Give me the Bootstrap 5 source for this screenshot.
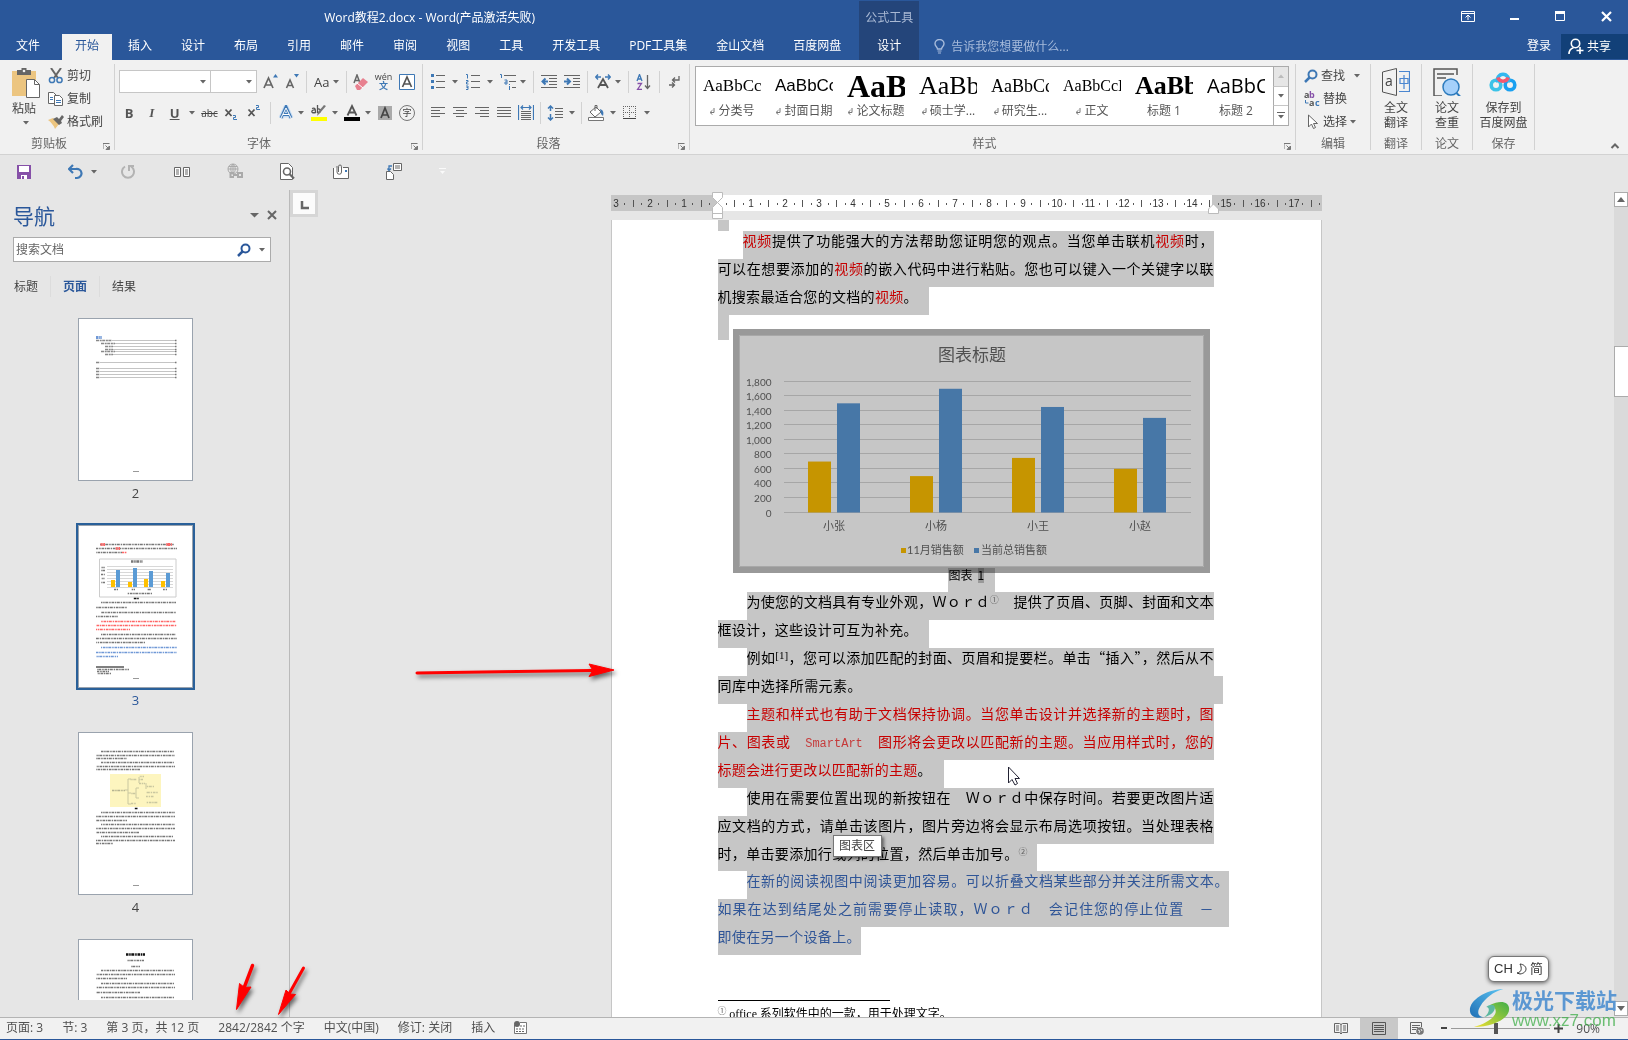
<!DOCTYPE html>
<html lang="zh-CN">
<head>
<meta charset="utf-8">
<meta name="viewport" content="width=device-width, initial-scale=1">
<title>Word教程2.docx - Word</title>
<link href="https://cdn.jsdelivr.net/npm/bootstrap@5.3.0/dist/css/bootstrap.min.css" rel="stylesheet">
<style>
:root{--ui:"Open Sans","Noto Sans CJK SC",sans-serif;--blue:#2a579a;--ico:#666;--acc:#3e78b5}
body{font:12px/16px var(--ui);color:#444;background:#e6e6e6;overflow:hidden}
button,input{font:inherit;color:inherit}
.tb{border:0;background:none;padding:0;display:inline-flex;align-items:center;white-space:nowrap;line-height:16px}
svg{display:block;flex:none}
.head{background:var(--blue);color:#fff;height:60px}
.head-title{height:34px;line-height:35px}
.tabs{height:26px;gap:3px;padding:0 5px 0 3px}
.tabs a,.ctx a{color:#fff;text-decoration:none;padding:0 13px;line-height:24px;white-space:nowrap}
.tabs a.on{background:#f1f1f1;color:var(--blue)}
.tabs a.file{margin-right:6px}
.ctx{width:60px;background:#24457a;margin-top:1px}
.ctx span{color:#a9b9d4;line-height:33px}
.tell{color:#a7bbdb;padding-left:15px;gap:6px}
.tell input{border:0;background:none;color:#a7bbdb;padding:0;width:160px;outline:0}
.tell input::placeholder{color:#a7bbdb;opacity:1}
.winctl{height:34px;padding:0 16px 2px 0;gap:35px}
.share{background:#124078;height:25px;width:67px;padding-left:7px;gap:3px}
.ribbon{background:#f1f1f1;height:95px;padding:4px 0;border-bottom:1px solid #d2d2d2}
.grp{border-right:1px solid #d2d2d2;height:86px;position:relative}
.grp-label{height:14px;line-height:16px;text-align:center;color:#666}
.launch{position:absolute;right:4px;bottom:0}
.g-clip{width:115px}.g-font{width:308px;padding:0 7px 0 4px}.g-para{width:267px;padding:0 6px 0 7px}
.g-style{width:606px}.g-edit{width:75px}.g-one{width:51px}.g-save{width:62px}
.grp-body{height:72px}
.rows{padding-top:2px}
.trow{height:31px;gap:6px;align-items:center;display:flex}
.trow-2{padding-left:2px}
.trow .vr-line{width:1px;height:22px;background:#d2d2d2}
.caret-w{width:12px;display:inline-flex;justify-content:flex-end}
.combo{height:23px;border:1px solid #c6c6c6;background:#fff;display:flex;align-items:center;justify-content:flex-end;padding-right:4px}
.combo input{border:0;outline:0;flex:1;min-width:0;background:none;padding:0 4px}
.ltr{width:16px;text-align:center;font-weight:700;font-size:13px;color:#555;display:block}
.small-b{height:23px;gap:3px}
.gal-wrap{padding:2px 6px 0 5px}
.gal{height:60px;border:1px solid #ababab;background:#fff}
.gal-item{width:72px;padding:0 7px;flex:none;display:flex;flex-direction:column;border:0;background:none}
.gal-prev{height:35px;line-height:38px;width:58px;overflow:hidden;color:#000;text-align:left;white-space:nowrap}
.gal-name{height:18px;line-height:18px;width:58px;display:flex;justify-content:center;align-items:center;gap:3px;color:#555;white-space:nowrap}
.serif{font-family:"Liberation Serif","Noto Sans CJK SC",serif}
.arial{font-family:"Liberation Sans",sans-serif}
.f17{font-size:17px}.f18{font-size:18px}.f16{font-size:16px}.f24{font-size:26px}.f30{font-size:32px}.f21{font-size:20px}
.gal-scroll{width:15px;margin-left:auto}
.gal-scroll button{flex:1;justify-content:center;border-left:1px solid #ababab;border-bottom:1px solid #c6c6c6}
.big{flex-direction:column;line-height:15px}
.qat{height:35px;padding:0 0 2px 15px}
.qat .cell{width:53px;gap:7px}
.navp{width:290px;border-right:1px solid #bababa;padding-bottom:17px}
.navp-in{width:271px}
.navp h1{font-size:21px;line-height:28px;color:var(--blue);margin:0;font-weight:400}
.nav-head{padding:12px 0 0 13px;height:47px;flex:none}
.find{margin-left:13px;height:25px;border:1px solid #ababab;background:#fff;padding:0 5px 0 2px}
.find input{border:0;outline:0;padding:0;flex:1;min-width:0}
.find input::placeholder{color:#666;opacity:1}
.nav-tabs2{padding:14px 0 0 14px;height:56px;flex:none}
.nav-tabs2 a{color:#444;text-decoration:none;line-height:21px;height:21px;padding-right:12px;margin-right:12px;border-right:1px solid #dcdcdc}
.nav-tabs2 a:last-child{border:0}
.nav-tabs2 a.on{color:var(--blue);font-weight:700}
.thumbs{overflow:hidden;min-height:0;padding-top:0}
.thumb{color:#444;text-decoration:none;font-size:13px;height:207px;flex:none}
.thumb .pg{border:1px solid #9aa3ae;background:#fff;margin-bottom:4px}
.thumb.on{color:var(--blue)}
.thumb.on .pg{outline:2px solid #2a6099}
.corner{width:28px;height:27px;border:3px solid #d6d6d6;background:#fbfbfb;flex:none}
.ruler{width:711px;margin:0 auto}
.paper{width:711px;background:#fff;border:solid #c6c6c6;border-width:0 1px;margin:0 auto;padding:0 107px 0 106px;color:#000;position:relative;overflow:hidden;font:14px/18px "Noto Sans CJK SC",sans-serif}
.ln{background:#c6c6c6;height:28px;text-align:justify;text-align-last:justify;white-space:nowrap;width:496px}
.ln.ind1{margin-left:25px;width:471px}
.ln.ind{margin-left:29px;width:467px}
.ln.s14{width:211px;padding-right:11px}
.ln.s15{width:226px;padding-right:12px}
.ln.s22{width:319px;padding-right:9px;height:27px}
.ln.s10{width:505px;padding-right:361px}
.ln.s10b{width:143px}
.ln.over{width:482px}
.ln.full{width:511px;padding-right:15px}
.nub{width:11px;background:#c6c6c6}
.c-red{color:#c60000}.c-blu{color:#2f5597}
.mono{font:12px/18px "Liberation Mono",monospace;opacity:.7}
.note{font-size:9px;color:#666;vertical-align:4px;line-height:1}
.sup1{font:11px/1 "Liberation Serif",serif;vertical-align:4px}
.chartbox{margin:-11px 0 0 15px;width:477px;height:244px;border:6px solid #999;background:#c6c6c6;position:relative}
.chartbox svg{margin:-6px}
.capt{width:47px;height:24px;background:#c6c6c6;mix-blend-mode:multiply;margin:-5px 0 0 230px;font-size:12px;line-height:14px;padding-left:1px;position:relative;z-index:1}
.capt b{background:#999;font-weight:400;display:inline-block;margin-left:5px;height:15px}
.fn-rule{width:172px;height:1px;background:#000;margin-top:45px}
.fn{font-size:12px;line-height:24px;white-space:nowrap}
.tip{position:absolute;left:221px;top:615px;width:49px;height:22px;border:1px solid #767676;background:#fff;color:#444;font-size:12px;line-height:18px;text-align:center;box-shadow:2px 2px 3px rgba(0,0,0,.5)}
.mouse{position:absolute;left:395px;top:546px}
.vscroll{width:14px;background:#dadada;margin:2px 0 1px}
.vscroll button{width:14px;height:15px;border:1px solid #ababab;background:#fff;justify-content:center}
.vthumb{height:51px;background:#fff;border:1px solid #ababab;border-right:0;margin-top:139px}
.stat{height:23px;background:#f1f1f1;border-top:1px solid #b4b4b4;border-bottom:1px solid var(--blue);padding-left:6px;color:#505050}
.stat .left{gap:19px;padding-bottom:2px}
.stat .view{width:38px;height:21px;justify-content:center}
.stat .view.on{background:#c8c8c8}
.zoomer{-webkit-appearance:none;appearance:none;width:99px;height:11px;background:linear-gradient(#9a9a9a,#9a9a9a) center/100% 1px no-repeat;margin:0 4px 0 4px}
.zoomer::-webkit-slider-thumb{-webkit-appearance:none;width:4px;height:11px;background:#555}
.ime{position:absolute;right:79px;bottom:58px;width:61px;height:26px;border:1px solid #777;border-radius:6px;background:#fff;box-shadow:0 1px 4px rgba(0,0,0,.6);color:#333;gap:3px;font:13px/24px "Liberation Sans","Noto Sans CJK SC",sans-serif}
.wm{position:absolute;right:11px;bottom:9px;pointer-events:none}
.wm b{display:block;font:700 21px/22px "Noto Sans CJK SC",sans-serif;color:#5b97d2}
.wm i{display:block;font:17px/21px "Liberation Sans",sans-serif;color:#3fae49;opacity:.75}
.marks{position:absolute;left:0;top:0;pointer-events:none;filter:drop-shadow(2px 3px 2px rgba(0,0,0,.55))}
</style>
<script src="https://cdn.jsdelivr.net/npm/bootstrap@5.3.0/dist/js/bootstrap.bundle.min.js"></script>
</head>
<body>
<svg width="0" height="0" class="position-absolute">
<defs>
<symbol id="car" viewBox="0 0 6 4"><path d="M0 0h6L3 3.5z" fill="#666"/></symbol>
<symbol id="lau" viewBox="0 0 7 7"><path d="M0 6V.5h6.5" fill="none" stroke="#777"/><path d="M2.5 2.5l2.5 2.5M6.5 3v3.5H3z" stroke="#777" fill="#777"/></symbol>
<symbol id="ret" viewBox="0 0 6 7"><path d="M5 0v4.5H1.500M3.500 2.200L1 4.500l2.500 2.200" fill="none" stroke="#777"/></symbol>
<symbol id="mag" viewBox="0 0 14 14"><circle cx="8.500" cy="5.500" r="4" fill="none" stroke="currentColor" stroke-width="2"/><path d="M5.500 8.500L1 13" stroke="currentColor" stroke-width="2.500"/></symbol>
</defs>
</svg>
<div class="d-flex flex-column vh-100 position-relative">

<header class="head d-flex flex-shrink-0">
  <div class="d-flex flex-column">
    <div class="head-title text-center">Word教程2.docx - Word(产品激活失败)</div>
    <nav class="tabs d-flex">
      <a class="file" href="#">文件</a><a class="on" href="#">开始</a><a href="#">插入</a><a href="#">设计</a><a href="#">布局</a><a href="#">引用</a><a href="#">邮件</a><a href="#">审阅</a><a href="#">视图</a><a href="#">工具</a><a href="#">开发工具</a><a href="#">PDF工具集</a><a href="#">金山文档</a><a href="#">百度网盘</a>
    </nav>
  </div>
  <div class="ctx d-flex flex-column align-items-center"><span>公式工具</span><a href="#">设计</a></div>
  <div class="flex-grow-1 d-flex flex-column">
    <div class="winctl d-flex align-items-center justify-content-end">
      <button class="tb" aria-label="功能区显示选项"><svg width="14" height="11" viewBox="0 0 14 11" fill="none" stroke="#fff"><path d="M.5.500h13v10H.5zM.5 2.500h13M7 9V4.500M4.500 6.500L7 4l2.500 2.500"/></svg></button>
      <button class="tb" aria-label="最小化"><svg width="10" height="10"><path d="M0 7h9v2H0z" fill="#fff"/></svg></button>
      <button class="tb" aria-label="最大化"><svg width="11" height="11"><path d="M.5.500h9v9H.5z" fill="none" stroke="#fff"/><path d="M0 0h10v3H0z" fill="#fff"/></svg></button>
      <button class="tb" aria-label="关闭"><svg width="11" height="11"><path d="M1 1l9 9M10 1l-9 9" stroke="#fff" stroke-width="2.200"/></svg></button>
    </div>
    <div class="d-flex justify-content-between">
      <label class="tell d-flex align-items-center"><svg width="11" height="15" viewBox="0 0 11 15" fill="none" stroke="#a7bbdb"><path d="M3.500 10C3.500 8 1 7.500 1 4.800a4.500 4.300 0 0 1 9 0C10 7.500 7.500 8 7.500 10z" stroke-width="1.400"/><path d="M3.500 12h4M4 14h3"/></svg><input placeholder="告诉我您想要做什么..." aria-label="告诉我您想要做什么"></label>
      <div class="d-flex align-items-start" style="gap:10px"><a href="#" class="text-white text-decoration-none lh-lg">登录</a>
      <button class="tb share"><svg width="16" height="17" viewBox="0 0 16 17" fill="none" stroke="#fff" stroke-width="1.600"><circle cx="7.500" cy="5.500" r="4.200"/><path d="M1 16c0-3.500 2-5.500 4.500-6.300M12 9v7M8.500 12.500h7"/></svg>共享</button></div>
    </div>
  </div>
</header>

<section class="ribbon d-flex flex-shrink-0">
  <div class="grp g-clip">
    <div class="grp-body d-flex">
      <button class="tb big align-items-start justify-content-start" style="padding:4px 8px 0 12px"><svg width="28" height="31" viewBox="0 0 28 31"><path d="M0 3h24v25H0z" fill="#ecc580"/><path d="M5 2h4.500V0h5v2H19v5H5z" fill="#666"/><circle cx="12" cy="3" r="1.300" fill="#f1f1f1"/><path d="M14.500 11.500h8l5 5v13h-13z" fill="#fff" stroke="#666"/><path d="M22.500 11.500v5h5" fill="none" stroke="#666"/></svg><span class="mt-1 lh-1">粘贴</span><svg width="6" height="4" style="margin:6px 0 0 11px"><use href="#car"/></svg></button>
      <div class="d-flex flex-column">
        <button class="tb small-b"><svg width="16" height="16" viewBox="0 0 16 16"><path d="M3 0l7 10M13 0L6 10" stroke="#666" stroke-width="2"/><g fill="none" stroke="#3e78b5" stroke-width="1.500"><circle cx="4" cy="12" r="2.600"/><circle cx="11.500" cy="12" r="2.600"/></g></svg>剪切</button>
        <button class="tb small-b"><svg width="16" height="16" viewBox="0 0 16 16" fill="#fff" stroke="#666"><path d="M.5 1.500h5l3 3v8h-8z"/><path d="M6.500 4.500h5l3 3v7h-8z"/><path d="M2 6.500h3M2 8.500h3M8 9.500h5M8 11.500h5" stroke="#3e78b5"/></svg>复制</button>
        <button class="tb small-b"><svg width="16" height="16" viewBox="0 0 16 16"><path d="M0 6l5-2 6 6-4 5C6 12 3 8 0 6z" fill="#ecc580"/><path d="M5 5l4-2 2 2 3-4 2 2-3 4 1 2-3 2z" fill="#666"/></svg>格式刷</button>
      </div>
    </div>
    <div class="grp-label pe-3">剪贴板</div><svg class="launch" width="7" height="7"><use href="#lau"/></svg>
  </div>

  <div class="grp g-font">
    <div class="grp-body rows">
      <div class="trow justify-content-between">
        <div class="d-flex"><div class="combo" style="width:92px"><input aria-label="字体"><svg width="6" height="4"><use href="#car"/></svg></div><div class="combo border-start-0" style="width:46px"><input aria-label="字号"><svg width="6" height="4"><use href="#car"/></svg></div></div>
        <button class="tb" aria-label="增大字号"><svg width="15" height="16" viewBox="0 0 15 16"><path d="M1 14L5.500 4 10 14M2.500 11h6" fill="none" stroke="#666" stroke-width="1.700"/><path d="M10 3.500h5L12.500 0z" fill="#3e78b5"/></svg></button>
        <button class="tb" aria-label="减小字号"><svg width="15" height="16" viewBox="0 0 15 16"><path d="M1.500 14L5 6l3.500 8M3 11.500h4" fill="none" stroke="#666" stroke-width="1.600"/><path d="M9 0h5l-2.500 3.500z" fill="#3e78b5"/></svg></button>
        <i class="vr-line"></i>
        <button class="tb" style="font-size:13px">Aa<span class="caret-w" style="width:10px"><svg width="6" height="4"><use href="#car"/></svg></span></button>
        <i class="vr-line"></i>
        <button class="tb" aria-label="清除格式"><svg width="15" height="16" viewBox="0 0 15 16"><path d="M1 9L4 1l3 8M2 6.500h4" fill="none" stroke="#666" stroke-width="1.500"/><path d="M2 12l8-8 5 4-8 8H4z" fill="#e8808f"/><path d="M4 9l6 5" stroke="#fff"/></svg></button>
        <button class="tb flex-column" aria-label="拼音指南"><span style="font-size:9px;line-height:8px">wén</span><span style="font-size:9px;line-height:9px;color:#3e78b5;font-weight:700">文</span></button>
        <button class="tb" aria-label="字符边框"><svg width="16" height="16"><path d="M.5.500h15v15H.5z" fill="#fff" stroke="#3e78b5"/><path d="M3.500 13L8 3l4.500 10M5 10h6" fill="none" stroke="#555" stroke-width="1.700"/></svg></button>
      </div>
      <div class="trow trow-2 justify-content-between">
        <button class="tb ltr">B</button><button class="tb ltr fst-italic serif">I</button>
        <button class="tb"><span class="ltr text-decoration-underline">U</span><span class="caret-w"><svg width="6" height="4"><use href="#car"/></svg></span></button>
        <button class="tb text-decoration-line-through justify-content-center" style="width:16px;font-size:10px">abc</button>
        <button class="tb" aria-label="下标"><svg width="16" height="16"><path d="M1.500 4.500l6 6.500M7.500 4.500l-6 6.500" stroke="#555" stroke-width="1.800"/><path d="M9 10.500h2.500v2H9.500v2H13" fill="none" stroke="#3e78b5"/></svg></button>
        <button class="tb" aria-label="上标"><svg width="16" height="16"><path d="M1.500 4.500l6 6.500M7.500 4.500l-6 6.500" stroke="#555" stroke-width="1.800"/><path d="M9 .5h2.500v2H9.500v2H13" fill="none" stroke="#3e78b5"/></svg></button>
        <i class="vr-line"></i>
        <button class="tb" aria-label="文本效果"><svg width="16" height="16"><path d="M3 13L8 2l5 11M5 10h6" fill="none" stroke="#c9def4" stroke-width="5"/><path d="M3 13L8 2l5 11M5 9.500h6" fill="none" stroke="#3e78b5" stroke-width="3"/><path d="M3 13L8 3l5 10M5 9.500h6" fill="none" stroke="#fff"/></svg><span class="caret-w" style="width:10px"><svg width="6" height="4"><use href="#car"/></svg></span></button>
        <button class="tb" aria-label="突出显示"><svg width="16" height="17" viewBox="0 0 16 17"><path d="M0 13h16v4H0z" fill="#ff0"/><path d="M1 4.500c3-1 3.500 0 3.500 4-3 .6-4 0-3.500-1.500s2-1 3.500-1M6.500 1v7.500c4 .5 4-4 .5-3.500" fill="none" stroke="#555" stroke-width="1.300"/><path d="M15 2l-6 7-3 3 1-4 6-7z" fill="#777"/></svg><span class="caret-w" style="width:11px"><svg width="6" height="4"><use href="#car"/></svg></span></button>
        <button class="tb" aria-label="字体颜色"><svg width="16" height="17" viewBox="0 0 16 17"><path d="M0 13h16v4H0z"/><path d="M3.500 11.500L8 2l4.500 9.500M5 8.500h6" fill="none" stroke="#555" stroke-width="1.800"/></svg><span class="caret-w" style="width:11px"><svg width="6" height="4"><use href="#car"/></svg></span></button>
        <button class="tb" aria-label="字符底纹"><svg width="14" height="14"><path d="M0 0h14v14H0z" fill="#aaa"/><path d="M3 12L7 2l4 10M4.500 9h5" fill="none" stroke="#444" stroke-width="1.700"/></svg></button>
        <button class="tb justify-content-center" style="width:16px;height:16px;border:1px solid #777;border-radius:8px;font-size:9px">字</button>
      </div>
    </div>
    <div class="grp-label pe-3">字体</div><svg class="launch" width="7" height="7"><use href="#lau"/></svg>
  </div>

  <div class="grp g-para">
    <div class="grp-body rows">
      <div class="trow justify-content-between">
        <button class="tb" aria-label="项目符号"><svg width="16" height="16"><path d="M1 0h3v3H1zM1 6h3v3H1zM1 12h3v3H1z" fill="#3e78b5"/><path d="M6 1.500h9M6 7.500h9M6 13.500h9" stroke="#666"/></svg><span class="caret-w"><svg width="6" height="4"><use href="#car"/></svg></span></button>
        <button class="tb" aria-label="编号"><svg width="16" height="16"><path d="M1 .5h1.500v4M1 6.500h2v1.500H1.500V10h2M1 12h2v3.500H1M1.500 13.500H3" fill="none" stroke="#3e78b5"/><path d="M6 1.500h9M6 7.500h9M6 13.500h9" stroke="#666"/></svg><span class="caret-w"><svg width="6" height="4"><use href="#car"/></svg></span></button>
        <button class="tb" aria-label="多级列表"><svg width="16" height="16"><path d="M0 .5h1.500V4M4.500 6h2.500v4H5V8h2M9.500 12v4M9.500 10v1" fill="none" stroke="#3e78b5"/><path d="M4 1.500h12M9 7.500h7M12 13.500h4" stroke="#666"/></svg><span class="caret-w" style="width:10px"><svg width="6" height="4"><use href="#car"/></svg></span></button>
        <i class="vr-line"></i>
        <button class="tb" aria-label="减少缩进"><svg width="16" height="16"><path d="M0 1.500h16M8 4.500h8M8 7.500h8M8 10.500h8M0 13.500h16" stroke="#666"/><path d="M7 7.500H2M4.500 4.500l-3 3 3 3" fill="none" stroke="#3e78b5" stroke-width="2"/></svg></button>
        <button class="tb" aria-label="增加缩进"><svg width="16" height="16"><path d="M0 1.500h16M9 4.500h7M9 7.500h7M9 10.500h7M0 13.500h16" stroke="#666"/><path d="M0 7.500h5M3 4.500l3 3-3 3" fill="none" stroke="#3e78b5" stroke-width="2"/></svg></button>
        <i class="vr-line"></i>
        <button class="tb" aria-label="中文版式"><svg width="16" height="16"><path d="M3 14L8 5l5 9M5 11h6" fill="none" stroke="#555" stroke-width="1.800"/><path d="M6 3H1M3 .5L.8 3 3 5.500M10 3h5M13 .5L15.200 3 13 5.500" fill="none" stroke="#3e78b5" stroke-width="1.400"/></svg><span class="caret-w" style="width:10px"><svg width="6" height="4"><use href="#car"/></svg></span></button>
        <i class="vr-line"></i>
        <button class="tb" aria-label="排序"><svg width="16" height="16"><path d="M1 7l2.500-6.500L6 7M2 5h3.500" fill="none" stroke="#3e78b5" stroke-width="1.300"/><path d="M1.500 9.500h4l-4 6h4.500" fill="none" stroke="#8650a8" stroke-width="1.300"/><path d="M11.500 1v13M9 11.500l2.500 3 2.500-3" fill="none" stroke="#666" stroke-width="1.300"/></svg></button>
        <i class="vr-line"></i>
        <button class="tb" aria-label="显示编辑标记"><svg width="16" height="16"><path d="M12 2v4H6M8 3.500L5.500 6 8 8.500M2 11h5M5 8.500L7.500 11 5 13.500" fill="none" stroke="#666" stroke-width="1.300"/></svg></button>
      </div>
      <div class="trow">
        <button class="tb" aria-label="左对齐"><svg width="16" height="16"><path d="M1 2.500h14M1 5.500h9M1 8.500h14M1 11.500h9" stroke="#666"/></svg></button>
        <button class="tb" aria-label="居中"><svg width="16" height="16"><path d="M1 2.500h14M4 5.500h8M1 8.500h14M4 11.500h8" stroke="#666"/></svg></button>
        <button class="tb" aria-label="右对齐"><svg width="16" height="16"><path d="M1 2.500h14M6 5.500h9M1 8.500h14M6 11.500h9" stroke="#666"/></svg></button>
        <button class="tb" aria-label="两端对齐"><svg width="16" height="16"><path d="M1 2.500h14M1 5.500h14M1 8.500h14M1 11.500h14" stroke="#666"/></svg></button>
        <button class="tb" aria-label="分散对齐"><svg width="16" height="16"><path d="M.5 0v15M15.500 0v15M3 2.500h10M5 .5L3 2.500l2 2M11 .5l2 2-2 2" fill="none" stroke="#3e78b5" stroke-width="1.200"/><path d="M3 6.500h10M3 8.500h10M3 10.500h10M3 12.500h10M3 14.500h10" stroke="#666"/></svg></button>
        <i class="vr-line"></i>
        <button class="tb" aria-label="行距"><svg width="16" height="16"><path d="M3.500 1v5M1 3.500L3.500 1 6 3.500M3.500 9v6M1 12.500L3.500 15 6 12.500" fill="none" stroke="#3e78b5" stroke-width="1.500"/><path d="M8 3.500h8M8 6.500h8M8 9.500h8M8 12.500h8" stroke="#666"/></svg><span class="caret-w"><svg width="6" height="4"><use href="#car"/></svg></span></button>
        <i class="vr-line"></i>
        <button class="tb" aria-label="底纹"><svg width="16" height="16"><path d="M.5 12.500h15v3H.5z" fill="#fff" stroke="#777"/><path d="M2 7l6-5 5 5-6 5z" fill="#fff" stroke="#666"/><path d="M7 6V.5h2V4" fill="none" stroke="#666"/><path d="M12 4c3 1 4 3 3 7l-2-2z" fill="#3e78b5"/></svg><span class="caret-w"><svg width="6" height="4"><use href="#car"/></svg></span></button>
        <button class="tb" aria-label="边框"><svg width="16" height="16"><path d="M1 1.500h13M1 7.500h13M1.500 1v12M7.500 1v12M13.500 1v12" stroke="#666" stroke-dasharray="1 1"/><path d="M1 13.500h13" stroke="#444"/></svg><span class="caret-w"><svg width="6" height="4"><use href="#car"/></svg></span></button>
      </div>
    </div>
    <div class="grp-label pe-3">段落</div><svg class="launch" width="7" height="7"><use href="#lau"/></svg>
  </div>

  <div class="grp g-style">
    <div class="grp-body gal-wrap"><div class="gal d-flex">
      <button class="gal-item"><span class="gal-prev serif f17">AaBbCc</span><span class="gal-name"><svg width="6" height="7"><use href="#ret"/></svg>分类号</span></button>
      <button class="gal-item"><span class="gal-prev arial f17">AaBbCc</span><span class="gal-name"><svg width="6" height="7"><use href="#ret"/></svg>封面日期</span></button>
      <button class="gal-item"><span class="gal-prev serif f30 fw-bold">AaB</span><span class="gal-name"><svg width="6" height="7"><use href="#ret"/></svg>论文标题</span></button>
      <button class="gal-item"><span class="gal-prev serif f24">AaBb</span><span class="gal-name"><svg width="6" height="7"><use href="#ret"/></svg>硕士学...</span></button>
      <button class="gal-item"><span class="gal-prev serif f18">AaBbCc</span><span class="gal-name"><svg width="6" height="7"><use href="#ret"/></svg>研究生...</span></button>
      <button class="gal-item"><span class="gal-prev serif f16">AaBbCcI</span><span class="gal-name"><svg width="6" height="7"><use href="#ret"/></svg>正文</span></button>
      <button class="gal-item"><span class="gal-prev serif f24 fw-bold">AaBb</span><span class="gal-name">标题 1</span></button>
      <button class="gal-item"><span class="gal-prev f21">AaBbC</span><span class="gal-name">标题 2</span></button>
      <div class="gal-scroll d-flex flex-column"><button class="tb" style="background:#e6e6e6" aria-label="上"><svg width="6" height="4"><path d="M0 4h6L3 .5z" fill="#bbb"/></svg></button><button class="tb" aria-label="下"><svg width="6" height="4"><use href="#car"/></svg></button><button class="tb border-bottom-0" aria-label="更多"><svg width="8" height="7"><path d="M0 .5h8" stroke="#666"/><path d="M1 3h6L4 6.500z" fill="#666"/></svg></button></div>
    </div></div>
    <div class="grp-label pe-3">样式</div><svg class="launch" width="7" height="7"><use href="#lau"/></svg>
  </div>

  <div class="grp g-edit">
    <div class="grp-body d-flex flex-column align-items-start ps-2">
      <button class="tb small-b"><svg width="14" height="14" style="color:#3e78b5"><use href="#mag"/></svg>查找<span class="caret-w"><svg width="6" height="4"><use href="#car"/></svg></span></button>
      <button class="tb small-b"><svg width="16" height="16" font-family="Open Sans" font-weight="700" font-size="9"><text x="0" y="7" fill="#555">a</text><text x="5" y="7" fill="#8650a8">b</text><text x="5" y="15" fill="#555">a</text><text x="11" y="15" fill="#3e78b5">c</text><path d="M1.500 9v3h3" stroke="#3e78b5" fill="none"/></svg>替换</button>
      <button class="tb small-b"><svg width="16" height="16"><path d="M4.500 1v12l3-3 2 4.500 2-1-2-4h4z" fill="#fff" stroke="#666"/></svg>选择<svg width="6" height="4"><use href="#car"/></svg></button>
    </div>
    <div class="grp-label">编辑</div>
  </div>
  <div class="grp g-one">
    <div class="grp-body text-center"><button class="tb big pt-1"><svg width="28" height="28" viewBox="0 0 28 28"><path d="M.5 4L14.500.500v27L.5 24z" fill="none" stroke="#555"/><path d="M17 3.500h10.500v20H17M22 7v14M18 10.500h8v5h-8z" fill="none" stroke="#4a86d0" stroke-width="1.200"/><text x="3" y="18" font-size="14" fill="#444">a</text></svg><span class="pt-1">全文<br>翻译</span></button></div>
    <div class="grp-label">翻译</div>
  </div>
  <div class="grp g-one">
    <div class="grp-body text-center"><button class="tb big pt-1"><svg width="28" height="28" viewBox="0 0 28 28"><path d="M24 7V1H1v27h8" fill="none" stroke="#555" stroke-width="1.500"/><path d="M4 6h17M4 10h9" stroke="#555" stroke-width="1.500"/><circle cx="18" cy="19" r="8" fill="#a5d0fa" stroke="#2d7bbd" stroke-width="1.500"/><path d="M23.500 25l4 4" stroke="#2d7bbd" stroke-width="2"/></svg><span class="pt-1">论文<br>查重</span></button></div>
    <div class="grp-label">论文</div>
  </div>
  <div class="grp g-save">
    <div class="grp-body text-center"><button class="tb big pt-1"><svg width="28" height="28" viewBox="0 0 28 28" fill="none" stroke-width="3.600"><circle cx="7" cy="17" r="4.800" stroke="#3cc3e8"/><circle cx="21" cy="17" r="4.800" stroke="#1aa0f0"/><path d="M9 14a5.500 5.500 0 1 1 10 0" stroke="#32b8f0"/><path d="M8.800 9.500a5.500 5.500 0 0 0 10.400 0" stroke="#f4586f"/></svg><span class="pt-1">保存到<br>百度网盘</span></button></div>
    <div class="grp-label">保存</div>
  </div>
  <button class="tb ms-auto align-self-end pe-2" aria-label="折叠功能区"><svg width="10" height="14"><path d="M1.500 12L5 8.500 8.500 12" fill="none" stroke="#666" stroke-width="2"/></svg></button>
</section>

<div class="qat d-flex flex-shrink-0">
  <button class="tb cell" aria-label="保存"><svg width="16" height="16"><path d="M2 1h14v14H2z" fill="#8650a8"/><path d="M4 2h10v6H4zM6 11h6v4H6z" fill="#fff"/><path d="M7 12h2v3H7z" fill="#8650a8"/></svg></button>
  <button class="tb cell" aria-label="撤消"><svg width="16" height="16"><path d="M5 1L1 5l4 4M1 5h7a5 4.500 0 0 1 1 9H7" fill="none" stroke="#3e78b5" stroke-width="2.200"/></svg><svg width="6" height="4"><use href="#car"/></svg></button>
  <button class="tb cell" aria-label="重复"><svg width="16" height="16"><path d="M4 2.500A6 6 0 1 0 10 2.500M8 7V2h5" fill="none" stroke="#b3b3b3" stroke-width="2"/></svg></button>
  <button class="tb cell" aria-label="并排"><svg width="16" height="16"><path d="M.5 3.500h6v9h-6zM9.500 3.500h6v9h-6zM2 6h3M2 8h3M2 10h3M11 6h3M11 8h3M11 10h3" fill="#fff" stroke="#666"/></svg></button>
  <button class="tb cell" aria-label="链接"><svg width="16" height="17" fill="none" stroke="#aaa"><circle cx="6" cy="6" r="5"/><path d="M1 6h10M6 1v10M2 3.500h8M6 1C3 4 3 8 6 11M6 1c3 3 3 7 0 10"/><path d="M7 10h-3.500v4H7M10 10h5v4h-5M6 12h6" stroke-width="2"/></svg></button>
  <button class="tb cell" aria-label="打印预览"><svg width="16" height="17"><path d="M.5.500h8l4 4v12h-12z" fill="#fff" stroke="#666"/><circle cx="7" cy="8.500" r="3.500" fill="#fff" stroke="#666" stroke-width="1.600"/><path d="M9.500 11l4.500 4.500" stroke="#666" stroke-width="2.200"/></svg></button>
  <button class="tb cell" aria-label="附件"><svg width="16" height="16"><path d="M.5 4v10.500h15V3.500H10" fill="#fff" stroke="#666"/><path d="M4 2v6a2 2 0 0 0 4.500 0V2.500a1.500 1.500 0 0 0-3 0V8" fill="none" stroke="#666"/><path d="M12 6h2v2h-2z" fill="#3e78b5"/></svg></button>
  <button class="tb cell" aria-label="转换"><svg width="16" height="17"><path d="M7.500.500h8v7h-8zM9 3h5M9 5h5M.5 8.500h4l3 3v5h-7z" fill="#fff" stroke="#666"/><path d="M6 3H3v4M1.500 5.500L3 7.500l2-2" fill="none" stroke="#3e78b5" stroke-width="1.300"/></svg></button>
  <button class="tb cell" aria-label="自定义"><svg width="8" height="7"><path d="M0 .5h7" stroke="#fafafa"/><path d="M1 3h5L3.500 6z" fill="#fafafa"/></svg></button>
</div>

<div class="d-flex flex-grow-1" style="min-height:0">
  <aside class="navp d-flex flex-column flex-shrink-0">
    <div class="navp-in nav-head d-flex justify-content-between"><h1>导航</h1><div class="d-flex align-items-center gap-2 align-self-start pt-2"><svg width="9" height="5"><path d="M0 0h9L4.500 4.500z" fill="#666"/></svg><button class="tb" aria-label="关闭导航"><svg width="10" height="10" style="margin-right:-6px"><path d="M1 1l8 8M9 1L1 9" stroke="#666" stroke-width="2"/></svg></button></div></div>
    <div class="navp-in"><div class="find d-flex align-items-center"><input placeholder="搜索文档" aria-label="搜索文档"><svg width="14" height="14" style="color:var(--blue)"><use href="#mag"/></svg><svg width="6" height="4" class="ms-2"><use href="#car"/></svg></div></div>
    <nav class="nav-tabs2 d-flex"><a href="#">标题</a><a class="on" href="#">页面</a><a href="#">结果</a></nav>
    <div class="navp-in thumbs flex-grow-1 d-flex flex-column align-items-center" id="thumbs"></div>
  </aside>

  <div class="corner"><svg width="22" height="21"><path d="M9 8v7h7" fill="none" stroke="#666" stroke-width="2.500"/></svg></div>

  <main class="flex-grow-1 d-flex flex-column" style="min-width:0">
    <div class="ruler"><svg id="ruler" width="711" height="30" font-family="Liberation Sans" font-size="10" text-anchor="middle"></svg></div>
    <article class="paper flex-grow-1">
      <div class="nub" style="height:11px"></div>
      <div class="ln ind1"><span class="c-red">视频</span>提供了功能强大的方法帮助您证明您的观点。当您单击联机<span class="c-red">视频</span>时，</div>
      <div class="ln">可以在想要添加的<span class="c-red">视频</span>的嵌入代码中进行粘贴。您也可以键入一个关键字以联</div>
      <div class="ln s14">机搜索最适合您的文档的<span class="c-red">视频</span>。</div>
      <div class="nub" style="height:25px"></div>
      <div class="chartbox"><svg id="chart" width="477" height="244" font-family="Lato,'Noto Sans CJK SC'" font-size="11" fill="#505050" font-weight="400"></svg></div>
      <div class="capt">图表<b>1</b></div>
      <div class="ln ind">为使您的文档具有专业外观，Ｗｏｒｄ<span class="note">①</span>　提供了页眉、页脚、封面和文本</div>
      <div class="ln s14">框设计，这些设计可互为补充。</div>
      <div class="ln ind">例如<span class="sup1">[1]</span>，您可以添加匹配的封面、页眉和提要栏。单击“插入”，然后从不</div>
      <div class="ln s10">同库中选择所需元素。</div>
      <div class="ln ind c-red">主题和样式也有助于文档保持协调。当您单击设计并选择新的主题时，图</div>
      <div class="ln c-red">片、图表或　<span class="mono">SmartArt</span>　图形将会更改以匹配新的主题。当应用样式时，您的</div>
      <div class="ln s15 c-red">标题会进行更改以匹配新的主题<span class="text-black">。</span></div>
      <div class="ln ind">使用在需要位置出现的新按钮在　Ｗｏｒｄ中保存时间。若要更改图片适</div>
      <div class="ln">应文档的方式，请单击该图片，图片旁边将会显示布局选项按钮。当处理表格</div>
      <div class="ln s22">时，单击要添加行或列的位置，然后单击加号。<span class="note">②</span></div>
      <div class="ln ind over c-blu">在新的阅读视图中阅读更加容易。可以折叠文档某些部分并关注所需文本。</div>
      <div class="ln full c-blu">如果在达到结尾处之前需要停止读取，Ｗｏｒｄ　会记住您的停止位置　－</div>
      <div class="ln s10b c-blu">即使在另一个设备上。</div>
      <div class="fn-rule"></div>
      <div class="fn"><span class="note">①</span> <span class="serif">office</span> 系列软件中的一款，用于处理文字。</div>
      <div class="tip">图表区</div>
      <svg class="mouse" width="14" height="20"><path d="M1.500 1v16l3.500-3.500 3 5.500 2.500-1.500-2.500-5h4.500z" fill="#fff" stroke="#223"/></svg>
    </article>
  </main>

  <div class="vscroll d-flex flex-column flex-shrink-0">
    <button class="tb" aria-label="向上滚动"><svg width="8" height="5"><path d="M0 5h8L4 0z" fill="#666"/></svg></button>
    <div class="vthumb"></div>
    <button class="tb mt-auto" aria-label="向下滚动"><svg width="8" height="5"><path d="M0 0h8L4 5z" fill="#666"/></svg></button>
  </div>
</div>

<footer class="stat d-flex align-items-center justify-content-between flex-shrink-0">
  <div class="left d-flex align-items-center"><span>页面: 3</span><span>节: 3</span><span>第 3 页，共 12 页</span><span>2842/2842 个字</span><span>中文(中国)</span><span>修订: 关闭</span><span>插入</span>
    <svg width="13" height="13"><path d="M.5 4v8.500h12v-11H6" fill="#fff" stroke="#777"/><circle cx="3" cy="3" r="3" fill="#666"/><path d="M2 8h9M2 10.500h9M6 5h5" stroke="#666" stroke-dasharray="2 1"/></svg></div>
  <div class="d-flex align-items-center" style="padding-right:28px">
    <button class="tb view" aria-label="阅读视图"><svg width="14" height="13"><path d="M.5 1.500h5l1.500 1 1.500-1h5v9h-5L7 12l-1.500-1.500h-5zM7 2v10M2 4h3M2 6h3M2 8h3M9 4h3M9 6h3M9 8h3" fill="none" stroke="#666"/></svg></button>
    <button class="tb view on" aria-label="页面视图"><svg width="14" height="13"><path d="M.5.500h13v12H.5zM2 3.500h10M2 5.500h10M2 7.500h10M2 9.500h10" fill="none" stroke="#555"/></svg></button>
    <button class="tb view" aria-label="Web 版式"><svg width="14" height="13"><path d="M6 11.500H.5V.500h11V5M2 3.500h8M2 5.500h6M2 7.500h4" fill="none" stroke="#666"/><circle cx="10" cy="9" r="3.800" fill="#777"/><path d="M8 8l2 1-1 2M11 7l1 2" stroke="#eee" fill="none"/></svg></button>
    <button class="tb" style="margin-left:5px" aria-label="缩小"><svg width="6" height="3"><path d="M0 0h6v2H0z" fill="#444"/></svg></button>
    <input type="range" class="zoomer" value="45" aria-label="缩放">
    <button class="tb" aria-label="放大"><svg width="9" height="9"><path d="M0 4.500h9M4.500 0v9" stroke="#444" stroke-width="2"/></svg></button>
    <span style="padding-left:13px">90%</span>
  </div>
</footer>

<svg class="marks" width="640" height="1030" fill="#f00" stroke="#f00">
  <path d="M417 673L592 670.500" stroke-width="3" stroke-linecap="round"/><path d="M614 670l-25-6 4 6.500-4 6z" stroke-width="1"/>
  <path d="M252.500 965.500L244 988" stroke-width="3.500" stroke-linecap="round"/><path d="M236.500 1009.500l3-26 5 4 6.500-.5z" stroke-width="1"/>
  <path d="M303.500 968L289 994" stroke-width="3" stroke-linecap="round"/><path d="M278.500 1014.500l7.500-24.500 4 4 5.500.5z" stroke-width="1"/>
</svg>
<div class="ime d-flex align-items-center justify-content-center">CH<svg width="11" height="12"><path d="M4 1c8 1 8 9 0 10l-3-1c5-1 5-5 3-9z" fill="none" stroke="#333"/></svg>简</div>
<div class="wm d-flex">
  <svg width="43" height="41" viewBox="0 0 45 41" preserveAspectRatio="none"><defs><linearGradient id="lg1" x1="0" y1="1" x2="1" y2="0"><stop offset="0" stop-color="#1f6fb5"/><stop offset="1" stop-color="#5cc4f2"/></linearGradient><linearGradient id="lg2" x1="0" y1="1" x2="1" y2="0"><stop offset="0" stop-color="#f0e030"/><stop offset="1" stop-color="#3fae49"/></linearGradient></defs><path d="M36 1C16 2 0 13 1 23c.5 6 7 8 15 6-7 0-8-5-4-11C17 10 25 4 36 1z" fill="url(#lg1)"/><path d="M22 17c10-5 20-4 20 4 0 10-18 18-37 18 12-3 22-9 23-15 0-4-2-6-6-7z" fill="url(#lg2)"/><path d="M16 29c6-1 12-6 11-10-1-3-5-3-9 0 4 0 4 6-2 10z" fill="#5cb8a0"/></svg>
  <div><b>极光下载站</b><i>www.xz7.com</i></div>
</div>
</div>

<script>
// Ruler: numbers every unit, a tick at each half and dots at the quarters
(function(){
  var u=33.9,o=106.5,h='<path d="M0 5h711v16H0z" fill="#c6c6c6"/><path d="M107 5h494v16H107z" fill="#fff"/>';
  for(var q=-12;q<=71;q++){
    var x=Math.round(o+q*u/4);
    if(q===0)continue;
    if(q%4===0){h+='<text x="'+x+'" y="17" fill="#333">'+Math.abs(q/4)+'</text>';}
    else if(q%2===0)h+='<path d="M'+x+' 10h1v7h-1z" fill="#555"/>';
    else h+='<path d="M'+x+' 13h1v2h-1z" fill="#555"/>';
  }
  h+='<path d="M101.500 2.500h10v5l-5 5 5 5v11h-10v-11l5-5-5-5zM101.500 23.500h10M597.500 23v-4l5-5 5 5v4.500h-10z" fill="#fff" stroke="#bbb"/>';
  document.getElementById('ruler').innerHTML=h;
})();
// Column chart
(function(){
  var base=183.5,k=131/1800,h='<path d="M6.500 6.500h464v231h-464z" fill="none" stroke="#a8a8a8"/><text x="239" y="32" font-size="17" text-anchor="middle">图表标题</text>';
  for(var v=0;v<=1800;v+=200){
    var y=Math.round(base-v*k)-.5;
    h+='<path d="M51 '+y+'h407" stroke="#a6a6a6"/><text x="38.500" y="'+(y+4)+'" font-size="10" text-anchor="end">'+v.toLocaleString('en-US')+'</text>';
  }
  [['小张',700,1500],['小杨',500,1700],['小王',750,1450],['小赵',600,1300]].forEach(function(d,i){
    var x=75+i*102;
    h+='<rect x="'+x+'" y="'+(base-d[1]*k)+'" width="23" height="'+d[1]*k+'" fill="#c69500"/><rect x="'+(x+29)+'" y="'+(base-d[2]*k)+'" width="23" height="'+d[2]*k+'" fill="#4777a7"/><text x="'+(x+26)+'" y="201" text-anchor="middle">'+d[0]+'</text>';
  });
  h+='<path d="M168 219h5v5h-5z" fill="#c69500"/><text x="174" y="225">11月销售额</text><path d="M241 219h5v5h-5z" fill="#4777a7"/><text x="248" y="225">当前总销售额</text>';
  document.getElementById('chart').innerHTML=h;
})();
// Page thumbnails: every row is [x, y, width, colour]
(function(){
  var K='#777',R='#f66',B='#6f98d6';
  function rows(a){return a.map(function(r,i){return '<path d="M'+r[0]+' '+(r[1]+.5)+'h'+r[2]+'" stroke="'+(r[3]||K)+'" stroke-width="'+(r[4]||1.6)+'" stroke-dasharray="2.500 .7 1.500 .6 3 .9 1.500 .8" stroke-dashoffset="'+i*2+'"/>';}).join('');}
  function toc(a){return a.map(function(r){return '<path d="M'+r[0]+' '+(r[1]+.5)+'h'+r[2]+'" stroke="#888" stroke-width="1.500" stroke-dasharray="3 .7 2 .5"/><path d="M'+(r[0]+r[2])+' '+(r[1]+.5)+'H96" stroke="#c4c4c4" stroke-width="1"/><path d="M96 '+(r[1]+.5)+'h1.500" stroke="#777" stroke-width="1.500"/>';}).join('');}
  var p2=rows([[17,18,6,B,3]])+toc([[17,21,16],[22,24,14],[26,27,8],[26,30,8],[22,32,14],[26,35,8],[17,43,4],[17,49,4],[17,52,4],[17,55,4],[17,58,4]]);
  var bars='';[[32,7,17],[49,5,19],[65,8,16],[82,6,14]].forEach(function(b){bars+='<path d="M'+b[0]+' '+(61-b[1])+'h4v'+b[1]+'h-4z" fill="#ffc000"/><path d="M'+(b[0]+5)+' '+(61-b[2])+'h4v'+b[2]+'h-4z" fill="#5b9bd5"/>';});
  var grid='';for(var y=40;y<62;y+=3)grid+='<path d="M28 '+y+'.500h66" stroke="#d8d8d8"/>';
  var p3=rows([[21,18,74],[21,18,5,R,3],[87,18,6,R,3],[17,22,81],[36,22,5,R,3],[17,26,26],[43,26,5,R]])+'<path d="M20.500 33h76.500v38H20.500z" fill="#fff" stroke="#ccc"/>'+grid+bars+rows([[52,35,12,'#777',2.500],[22,41,4],[22,44,4],[22,48,4],[22,52,4],[22,56,4],[35,63,4],[52,63,4],[68,63,4],[84,63,4],[48,67,25],[54,72,6,'#111'],[22,76,75],[17,81,31],[22,86,75],[17,90,22],[22,95,75,R],[17,99,81,R],[17,103,34,R],[22,108,75],[17,112,81],[17,116,49],[22,121,76,B],[17,126,81,B],[17,130,22,B],[18,143,32],[18,145,12],[18,147,14]])+'<path d="M17 141h28" stroke="#000"/>';
  var p4=rows([[22,18,73],[17,22,79],[17,25,31],[22,29,73],[17,33,79],[17,36,44]])+'<path d="M31 41h51v33H31z" fill="#fdf5bf"/>'+'<path d="M46 57h3M49 46v25M49 46h3M49 71h3M49 60h3M57 55h3M57 65h3M57 55v10M60 44v6M67 50v6" stroke="#c9c7a0" fill="none"/>'+rows([[33,57,13,'#b5b390'],[51,46,7,'#c9c7a0'],[52,60,5,'#c9c7a0'],[52,70,5,'#c9c7a0'],[60,43,5,'#c9c7a0'],[60,46,4,'#c9c7a0'],[60,50,6,'#c9c7a0'],[67,53,8,'#c9c7a0'],[67,59,12,'#c9c7a0'],[67,63,8,'#c9c7a0'],[67,69,12,'#c9c7a0'],[55,75,4,'#111'],[22,79,74],[17,83,79],[17,87,31],[22,91,74],[17,95,79],[17,99,43],[22,103,72],[17,107,79],[17,110,17]]);
  var p5=rows([[47,14,19,'#111',2.500],[48,20,17],[52,26,9],[22,30,73],[17,34,79],[17,38,31],[22,43,73],[17,47,79],[17,52,44],[22,57,73],[17,61,79]]);
  document.getElementById('thumbs').innerHTML=[[2,p2],[3,p3],[4,p4],[5,p5]].map(function(t){
    return '<a href="#" class="thumb d-flex flex-column align-items-center'+(t[0]===3?' on':'')+'"><span class="pg"><svg width="113" height="161">'+t[1]+'<path d="M54 152.500h6" stroke="#999"/></svg></span>'+t[0]+'</a>';
  }).join('');
})();
</script>
</body>
</html>
